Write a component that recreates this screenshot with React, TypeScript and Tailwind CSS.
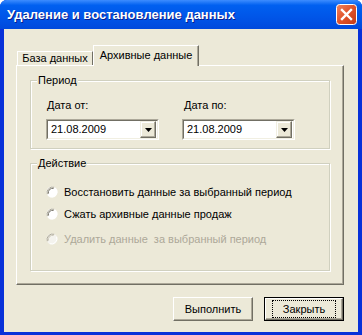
import type { ReactNode } from 'react';

const FONT = { fontFamily: '"Liberation Sans", Arial, sans-serif' };

function GroupBox({ title, className, children }: { title: string; className?: string; children: ReactNode }) {
  return (
    <div
      className={`relative border border-[#D0D0BF] shadow-[1px_1px_0_#fff,inset_1px_1px_0_#fff] ${className ?? ''}`}
    >
      <span className="absolute -top-[8px] left-[6px] bg-[#ECE9D8] px-[1px] text-[11px] leading-[14px] text-black">
        {title}
      </span>
      {children}
    </div>
  );
}

function DateCombo({ value }: { value: string }) {
  return (
    <div className="flex h-[21px] w-[113px] items-center border border-t-[#ACA899] border-l-[#ACA899] border-r-white border-b-white">
      <div className="flex h-full flex-1 items-center border border-t-[#716F64] border-l-[#716F64] border-r-[#F1EFE2] border-b-[#F1EFE2] bg-white">
        <span className="flex-1 pl-[3px] text-[11px] leading-none text-black">{value}</span>
        <div className="mr-[1px] flex h-[17px] w-[16px] items-center justify-center border border-t-[#F1EFE2] border-l-[#F1EFE2] border-r-[#716F64] border-b-[#716F64] bg-[#ECE9D8] shadow-[inset_-1px_-1px_0_#ACA899,inset_1px_1px_0_#fff]">
          <svg width="7" height="4" viewBox="0 0 7 4">
            <path d="M0 0h7L3.5 4z" fill="#000" />
          </svg>
        </div>
      </div>
    </div>
  );
}

function Radio({ label, disabled }: { label: string; disabled?: boolean }) {
  return (
    <div className="flex items-center gap-[6px]">
      <svg width="12" height="12" viewBox="0 0 12 12">
        <circle cx="6" cy="6" r="5.5" fill={disabled ? '#F4F3EE' : '#fff'} />
        <path d="M1.3 8.2A5.5 5.5 0 0 1 8.2 1.3" fill="none" stroke="#ACA899" strokeWidth="1" />
        <path d="M2.4 7.6A4.3 4.3 0 0 1 7.6 2.4" fill="none" stroke={disabled ? '#CBC7B8' : '#716F64'} strokeWidth="1" />
        <path d="M10.7 3.8A5.5 5.5 0 0 1 3.8 10.7" fill="none" stroke="#fff" strokeWidth="1" />
      </svg>
      <span className={`whitespace-pre text-[11px] leading-none ${disabled ? 'text-[#ACA899]' : 'text-black'}`}>
        {label}
      </span>
    </div>
  );
}

function Button({ label, isDefault }: { label: string; isDefault?: boolean }) {
  return (
    <div
      className={`flex h-[24px] w-[80px] items-center justify-center bg-[#ECE9D8] ${
        isDefault ? 'border border-black' : ''
      }`}
    >
      <div className="flex h-full w-full items-center justify-center border border-t-white border-l-white border-r-[#716F64] border-b-[#716F64] shadow-[inset_-1px_-1px_0_#ACA899]">
        <span
          className={`px-[10px] py-[1px] text-[11px] leading-[14px] text-black ${
            isDefault ? 'outline-1 outline-dotted outline-black' : ''
          }`}
        >
          {label}
        </span>
      </div>
    </div>
  );
}

function CloseIcon() {
  return (
    <svg width="21" height="21" viewBox="0 0 21 21">
      <defs>
        <linearGradient id="closeFill" x1="0" y1="0" x2="1" y2="1">
          <stop offset="0" stopColor="#F08560" />
          <stop offset="0.5" stopColor="#E0522A" />
          <stop offset="1" stopColor="#C23A15" />
        </linearGradient>
      </defs>
      <rect x="0.5" y="0.5" width="20" height="20" rx="3" fill="url(#closeFill)" stroke="#fff" />
      <path d="M6 6l9 9M15 6l-9 9" stroke="#fff" strokeWidth="2.4" strokeLinecap="square" />
    </svg>
  );
}

export default function App() {
  return (
    <div
      className="flex h-[335px] w-[362px] flex-col overflow-hidden rounded-t-[7px] bg-[#0831D9]"
      style={FONT}
    >
      <div className="flex h-[29px] items-center justify-between bg-[#0055EA] bg-[linear-gradient(180deg,#3D8DFF_0%,#0060F0_18%,#0055E8_60%,#0049DC_100%)] pl-[7px] pr-[5px]">
        <span className="text-[13px] font-bold text-white [text-shadow:1px_1px_0_#0A1E8C]">
          Удаление и востановление данных
        </span>
        <CloseIcon />
      </div>

      <div className="mx-[4px] mb-[3px] flex flex-1 flex-col bg-[#ECE9D8] pt-[16px]">
        <div className="ml-[13px] flex items-end">
          <div className="flex h-[14px] w-[76px] items-center justify-center border border-b-0 border-t-white border-l-white border-r-[#716F64] pb-[1px] text-[11px] text-black">
            База данных
          </div>
          <div className="relative z-10 -mb-[1px] flex h-[21px] w-[106px] items-center justify-center border border-b-0 border-t-white border-l-white border-r-[#716F64] bg-[#ECE9D8] pb-[2px] text-[11px] text-black shadow-[inset_-1px_0_0_#ACA899]">
            Архивные данные
          </div>
        </div>
        <div className="ml-[12px] mr-[14px] flex h-[220px] flex-col border border-t-white border-l-white border-r-[#716F64] border-b-[#716F64] px-[13px] pt-[14px] shadow-[inset_-1px_-1px_0_#ACA899]">
          <GroupBox title="Период" className="h-[69px]">
            <div className="flex gap-[23px] pl-[15px] pt-[17px]">
              <div className="flex flex-col gap-[7px]">
                <span className="pl-[1px] text-[11px] leading-[14px] text-black">Дата от:</span>
                <DateCombo value="21.08.2009" />
              </div>
              <div className="flex flex-col gap-[7px]">
                <span className="pl-[2px] text-[11px] leading-[14px] text-black">Дата по:</span>
                <DateCombo value="21.08.2009" />
              </div>
            </div>
          </GroupBox>
          <GroupBox title="Действие" className="mt-[14px] h-[108px]">
            <div className="flex flex-col pl-[15px] pt-[22px]">
              <Radio label="Восстановить данные за выбранный период" />
              <div className="h-[10px]" />
              <Radio label="Сжать архивные данные продаж" />
              <div className="h-[13px]" />
              <Radio label="Удалить данные  за выбранный период" disabled />
            </div>
          </GroupBox>
        </div>
        <div className="mr-[14px] mt-[12px] flex justify-end gap-[11px]">
          <Button label="Выполнить" />
          <Button label="Закрыть" isDefault />
        </div>
      </div>
    </div>
  );
}
